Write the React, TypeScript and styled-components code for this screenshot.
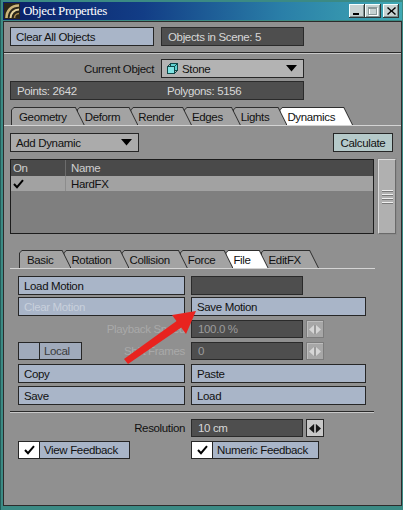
import styled, { createGlobalStyle } from 'styled-components';

const GlobalStyle = createGlobalStyle`
  html, body {
    margin: 0;
    padding: 0;
    background: #3b8a84;
  }
  body {
    font-family: 'Liberation Sans', Arial, sans-serif;
    font-size: 11.5px;
    letter-spacing: -0.35px;
  }
`;

const mainTabs = ['Geometry', 'Deform', 'Render', 'Edges', 'Lights', 'Dynamics'];
const subTabs = ['Basic', 'Rotation', 'Collision', 'Force', 'File', 'EditFX'];

export default function App() {
  return (
    <>
      <GlobalStyle />
      <Window>
        <TitleBar>
          <AppIcon />
          <TitleText>Object Properties</TitleText>
          <CaptionButtons>
            <CaptionButton>
              <svg width="8" height="8" viewBox="0 0 8 8">
                <rect x="0" y="6" width="6" height="2" fill="#000" />
              </svg>
            </CaptionButton>
            <CaptionButton>
              <svg width="10" height="9" viewBox="0 0 10 9">
                <rect x="1.5" y="1.5" width="8" height="7" fill="none" stroke="#fff" />
                <rect x="0.5" y="0.5" width="8" height="7" fill="none" stroke="#8a9a9a" />
                <rect x="0" y="0" width="9" height="2" fill="#8a9a9a" />
              </svg>
            </CaptionButton>
            <CaptionButton $gap>
              <svg width="9" height="8" viewBox="0 0 9 8">
                <path d="M1 0 L4.5 3.2 L8 0 L9 1 L5.6 4 L9 7 L8 8 L4.5 4.8 L1 8 L0 7 L3.4 4 L0 1 Z" fill="#000" />
              </svg>
            </CaptionButton>
          </CaptionButtons>
        </TitleBar>

        <Body>
          <Row $mt={5} $h={19} $pl={6} $gap={7}>
            <Button $w={144}>Clear All Objects</Button>
            <Field $w={143}>Objects in Scene: 5</Field>
          </Row>

          <Divider $ml={0} $w={397} />

          <Row $mt={5} $h={19} $pl={6} $gap={7}>
            <Label $w={144}>Current Object</Label>
            <Dropdown $w={143} $tone="#b3b3b3">
              <DropValue>
                <CubeIcon />
                Stone
              </DropValue>
              <DownArrow />
            </Dropdown>
          </Row>

          <Row $mt={3} $h={19} $pl={6} $gap={0}>
            <StatsBar>
              <span>Points: 2642</span>
              <span>Polygons: 5156</span>
            </StatsBar>
          </Row>

          <TabStrip $mt={7} $pl={7}>
            {mainTabs.map((t, i) => (
              <Tab key={t} $z={mainTabs.length - i} $active={t === 'Dynamics'}>
                <span>{t}</span>
              </Tab>
            ))}
          </TabStrip>
          <TabRule $ml={0} $w={397} />

          <Row $mt={7} $h={19} $pl={6} $gap={0} $between>
            <Dropdown $w={129} $tone="#ababab">
              <DropValue>Add Dynamic</DropValue>
              <DownArrow />
            </Dropdown>
            <CalcButton>Calculate</CalcButton>
          </Row>

          <Row $mt={7} $h={75} $pl={6} $gap={4}>
            <ListBox>
              <ListHeader>
                <Cell $head>On</Cell>
                <Cell $head>Name</Cell>
              </ListHeader>
              <ListItem>
                <Cell>
                  <Check />
                </Cell>
                <Cell>HardFX</Cell>
              </ListItem>
            </ListBox>
            <ScrollThumb>
              <Grip />
              <Grip />
              <Grip />
              <Grip />
            </ScrollThumb>
          </Row>

          <TabStrip $mt={16} $pl={15}>
            {subTabs.map((t, i) => (
              <Tab key={t} $z={subTabs.length - i} $active={t === 'File'}>
                <span>{t}</span>
              </Tab>
            ))}
          </TabStrip>
          <TabRule $ml={6} $w={365} />

          <Row $mt={7} $h={19} $pl={14} $gap={6}>
            <Button $w={167}>Load Motion</Button>
            <Field $w={112} />
          </Row>
          <Row $mt={2} $h={19} $pl={14} $gap={6}>
            <Button $w={167} $disabled>
              Clear Motion
            </Button>
            <Button $w={175}>Save Motion</Button>
          </Row>
          <Row $mt={4} $h={18} $pl={14} $gap={6}>
            <Label $w={167} $disabled>
              Playback Speed
            </Label>
            <Field $w={112} $disabled>
              100.0 %
            </Field>
            <Spinner />
          </Row>
          <Row $mt={4} $h={18} $pl={14} $gap={6}>
            <LabelCell $w={167}>
              <Toggle>
                <ToggleBox $tone="#a0aabb" />
                <ToggleText $w={41} $dim>
                  Local
                </ToggleText>
              </Toggle>
              <Label $w={0} $disabled>
                Shift Frames
              </Label>
            </LabelCell>
            <Field $w={112} $disabled>
              0
            </Field>
            <Spinner />
          </Row>
          <Row $mt={4} $h={19} $pl={14} $gap={6}>
            <Button $w={167}>Copy</Button>
            <Button $w={175}>Paste</Button>
          </Row>
          <Row $mt={3} $h={19} $pl={14} $gap={6}>
            <Button $w={167}>Save</Button>
            <Button $w={175}>Load</Button>
          </Row>

          <Divider $ml={6} $w={364} $mt={6} />

          <Row $mt={6} $h={18} $pl={14} $gap={6}>
            <Label $w={167}>Resolution</Label>
            <Field $w={112}>10 cm</Field>
            <Spinner $enabled />
          </Row>
          <Row $mt={4} $h={18} $pl={14} $gap={0}>
            <LabelCell $w={173}>
              <Toggle>
                <ToggleBox $tone="#ffffff">
                  <Check />
                </ToggleBox>
                <ToggleText $w={89}>View Feedback</ToggleText>
              </Toggle>
            </LabelCell>
            <Toggle>
              <ToggleBox $tone="#ffffff">
                <Check />
              </ToggleBox>
              <ToggleText $w={105}>Numeric Feedback</ToggleText>
            </Toggle>
          </Row>
        </Body>

        <ArrowOverlay width="403" height="510" viewBox="0 0 403 510">
          <polygon points="123,359 127,364 181,327 177,320" fill="#e8231f" />
          <polygon points="195,311 171,315 185,334" fill="#e8231f" />
        </ArrowOverlay>
      </Window>
    </>
  );
}

const AppIcon = () => (
  <svg width="16" height="16" viewBox="0 0 16 16">
    <rect width="16" height="16" fill="#2b2619" />
    <path d="M2.5 15 C2.5 8 7 2.5 15 2.5" stroke="#cbb57a" strokeWidth="2.6" fill="none" />
    <path d="M6.5 15 C6.5 10.5 10 6.5 15 6.5" stroke="#e6d49c" strokeWidth="2" fill="none" />
    <path d="M10.5 15 C10.5 12.5 12.5 10.5 15 10.5" stroke="#a88a4c" strokeWidth="1.6" fill="none" />
  </svg>
);

const CubeIcon = () => (
  <svg width="11" height="11" viewBox="0 0 11 11">
    <rect x="3.5" y="0.5" width="7" height="7" fill="#5fd0d0" stroke="#104848" />
    <rect x="0.5" y="3.5" width="7" height="7" fill="#7fe4e4" stroke="#104848" />
    <path d="M0.5 3.5 L3.5 0.5 M7.5 3.5 L10.5 0.5 M7.5 10.5 L10.5 7.5" stroke="#104848" />
  </svg>
);

const DownArrow = () => (
  <svg width="11" height="7" viewBox="0 0 11 7">
    <polygon points="0,0 11,0 5.5,6.5" fill="#000" />
  </svg>
);

const Check = () => (
  <svg width="11" height="10" viewBox="0 0 11 10">
    <path d="M1 5 L4 8.2 L10 1.2" stroke="#000" strokeWidth="2" fill="none" />
  </svg>
);

const Spinner = ({ $enabled }: { $enabled?: boolean }) => (
  <SpinBox $enabled={$enabled}>
    <svg width="12" height="9" viewBox="0 0 12 9">
      <polygon points="0,4.5 5,0 5,9" fill={$enabled ? '#151515' : '#d6d6d6'} />
      <rect x="5.5" y="0" width="1" height="9" fill={$enabled ? '#8a8a8a' : '#8e8e8e'} />
      <polygon points="12,4.5 7,0 7,9" fill={$enabled ? '#151515' : '#d6d6d6'} />
    </svg>
  </SpinBox>
);

const Window = styled.div`
  position: relative;
  box-sizing: border-box;
  width: 403px;
  height: 510px;
  padding: 2px 1px 4px 2px;
  background: #3b8a84;
  border-left: 1px solid #245c58;
  display: flex;
  flex-direction: column;
`;

const TitleBar = styled.div`
  height: 18px;
  display: flex;
  align-items: center;
  padding-left: 1px;
  background: linear-gradient(to right, #0a1f66 0%, #123d86 35%, #2a7fa8 70%, #3fa9b4 100%);
`;

const TitleText = styled.div`
  margin-left: 3px;
  color: #fff;
  font-family: 'Liberation Serif', 'Times New Roman', serif;
  font-size: 13px;
  letter-spacing: -0.4px;
`;

const CaptionButtons = styled.div`
  margin-left: auto;
  margin-right: 3px;
  display: flex;
`;

const CaptionButton = styled.div<{ $gap?: boolean }>`
  box-sizing: border-box;
  width: 16px;
  height: 14px;
  margin-left: ${(p) => (p.$gap ? '2px' : '0')};
  background: #c6d2d2;
  box-shadow: inset -1px -1px #303838, inset 1px 1px #f4ffff, inset -2px -2px #809090;
  display: flex;
  align-items: center;
  justify-content: center;
`;

const Body = styled.div`
  flex: 1;
  margin-top: 1px;
  background: #909090;
  border: 1px solid #2c2c2c;
  display: flex;
  flex-direction: column;
`;

interface RowProps {
  $mt: number;
  $h: number;
  $pl: number;
  $gap: number;
  $between?: boolean;
}

const Row = styled.div<RowProps>`
  display: flex;
  align-items: stretch;
  margin-top: ${(p) => p.$mt}px;
  height: ${(p) => p.$h}px;
  padding-left: ${(p) => p.$pl}px;
  padding-right: ${(p) => (p.$between ? 8 : 0)}px;
  gap: ${(p) => p.$gap}px;
  justify-content: ${(p) => (p.$between ? 'space-between' : 'flex-start')};
`;

const Button = styled.div<{ $w: number; $disabled?: boolean }>`
  box-sizing: border-box;
  width: ${(p) => p.$w}px;
  padding-left: 5px;
  border: 1px solid #262626;
  background: #a9b5c8;
  color: ${(p) => (p.$disabled ? '#c8d0dc' : '#111')};
  display: flex;
  align-items: center;
  white-space: nowrap;
`;

const CalcButton = styled.div`
  box-sizing: border-box;
  width: 60px;
  border: 1px solid #262626;
  background: #b5c9c9;
  color: #111;
  display: flex;
  align-items: center;
  justify-content: center;
`;

const Field = styled.div<{ $w: number; $disabled?: boolean }>`
  box-sizing: border-box;
  width: ${(p) => p.$w}px;
  padding-left: 6px;
  border: 1px solid #2a2a2a;
  background: #4e4e4e;
  color: ${(p) => (p.$disabled ? '#9c9c9c' : '#d8d8d8')};
  display: flex;
  align-items: center;
  white-space: nowrap;
`;

const Label = styled.div<{ $w: number; $disabled?: boolean }>`
  width: ${(p) => (p.$w ? `${p.$w}px` : 'auto')};
  flex: ${(p) => (p.$w ? 'none' : '1')};
  color: ${(p) => (p.$disabled ? '#a9a9a9' : '#111')};
  display: flex;
  align-items: center;
  justify-content: flex-end;
  white-space: nowrap;
`;

const LabelCell = styled.div<{ $w: number }>`
  width: ${(p) => p.$w}px;
  display: flex;
  align-items: stretch;
`;

const Dropdown = styled.div<{ $w: number; $tone: string }>`
  box-sizing: border-box;
  width: ${(p) => p.$w}px;
  padding: 0 6px 0 5px;
  border: 1px solid #262626;
  background: ${(p) => p.$tone};
  color: #111;
  display: flex;
  align-items: center;
  justify-content: space-between;
`;

const DropValue = styled.div`
  display: flex;
  align-items: center;
  gap: 4px;
`;

const StatsBar = styled.div`
  box-sizing: border-box;
  width: 294px;
  padding-left: 6px;
  border: 1px solid #2a2a2a;
  background: #4e4e4e;
  color: #d8d8d8;
  display: grid;
  grid-template-columns: 150px 1fr;
  align-items: center;
`;

const Divider = styled.div<{ $ml: number; $w: number; $mt?: number }>`
  margin-top: ${(p) => p.$mt ?? 6}px;
  margin-left: ${(p) => p.$ml}px;
  width: ${(p) => p.$w}px;
  height: 1px;
  background: #2a2a2a;
  border-bottom: 1px solid #c8c8c8;
`;

const TabStrip = styled.div<{ $mt: number; $pl: number }>`
  display: flex;
  height: 18px;
  margin-top: ${(p) => p.$mt}px;
  padding-left: ${(p) => p.$pl}px;
`;

const Tab = styled.div<{ $active?: boolean; $z: number }>`
  position: relative;
  z-index: ${(p) => p.$z};
  flex: none;
  height: 18px;
  margin-right: -8px;
  padding: 1px 18px 0 8px;
  box-sizing: border-box;
  display: flex;
  align-items: center;
  background: #2e2e2e;
  color: #111;
  clip-path: polygon(0 3px, 3px 0, calc(100% - 9px) 0, 100% 100%, 0 100%);

  &::before {
    content: '';
    position: absolute;
    inset: 1px 1px 0 1px;
    background: ${(p) => (p.$active ? '#ffffff' : '#a3a3a3')};
    clip-path: polygon(0 2px, 2px 0, calc(100% - 8.5px) 0, 100% 100%, 0 100%);
  }

  span {
    position: relative;
  }
`;

const TabRule = styled.div<{ $ml: number; $w: number }>`
  position: relative;
  z-index: 10;
  margin-left: ${(p) => p.$ml}px;
  width: ${(p) => p.$w}px;
  height: 1px;
  background: #d4d4d4;
`;

const ListBox = styled.div`
  box-sizing: border-box;
  width: 364px;
  border: 1px solid #1c1c1c;
  background: #7f7f7f;
  display: flex;
  flex-direction: column;
`;

const ListHeader = styled.div`
  height: 16px;
  background: #4a4a4a;
  display: grid;
  grid-template-columns: 55px 1fr;
`;

const ListItem = styled.div`
  height: 15px;
  background: #a2a2a2;
  display: grid;
  grid-template-columns: 55px 1fr;
`;

const Cell = styled.div<{ $head?: boolean }>`
  display: flex;
  align-items: center;
  padding-left: 5px;
  color: ${(p) => (p.$head ? '#cfcfcf' : '#111')};

  &:first-child {
    padding-left: 2px;
    border-right: 1px solid ${(p) => (p.$head ? '#6c6c6c' : '#8c8c8c')};
  }
`;

const ScrollThumb = styled.div`
  box-sizing: border-box;
  width: 18px;
  background: #b0b0b0;
  border: 1px solid;
  border-color: #dcdcdc #6a6a6a #6a6a6a #dcdcdc;
  box-shadow: 0 0 0 1px #8a8a8a;
  display: flex;
  flex-direction: column;
  align-items: center;
  justify-content: center;
  gap: 2px;
`;

const Grip = styled.div`
  width: 11px;
  height: 1px;
  background: #f0f0f0;
  border-bottom: 1px solid #7a7a7a;
`;

const SpinBox = styled.div<{ $enabled?: boolean }>`
  box-sizing: border-box;
  width: 18px;
  margin-left: -3px;
  border: 1px solid ${(p) => (p.$enabled ? '#2a2a2a' : '#7c7c7c')};
  background: ${(p) => (p.$enabled ? '#c8c8c8' : '#a7a7a7')};
  box-shadow: ${(p) => (p.$enabled ? 'none' : 'inset 1px 1px #bdbdbd')};
  display: flex;
  align-items: center;
  justify-content: center;
`;

const Toggle = styled.div`
  display: flex;
  align-items: stretch;
  border: 1px solid #262626;
  box-sizing: border-box;
`;

const ToggleBox = styled.div<{ $tone: string }>`
  width: 20px;
  background: ${(p) => p.$tone};
  border-right: 1px solid #262626;
  display: flex;
  align-items: center;
  justify-content: center;
`;

const ToggleText = styled.div<{ $w: number; $dim?: boolean }>`
  width: ${(p) => p.$w}px;
  padding-left: 4px;
  box-sizing: border-box;
  background: ${(p) => (p.$dim ? '#a0aabb' : '#a9b5c8')};
  color: ${(p) => (p.$dim ? '#3c3c3c' : '#111')};
  display: flex;
  align-items: center;
  white-space: nowrap;
`;

const ArrowOverlay = styled.svg`
  position: absolute;
  left: 0;
  top: 0;
  z-index: 50;
  pointer-events: none;
`;
